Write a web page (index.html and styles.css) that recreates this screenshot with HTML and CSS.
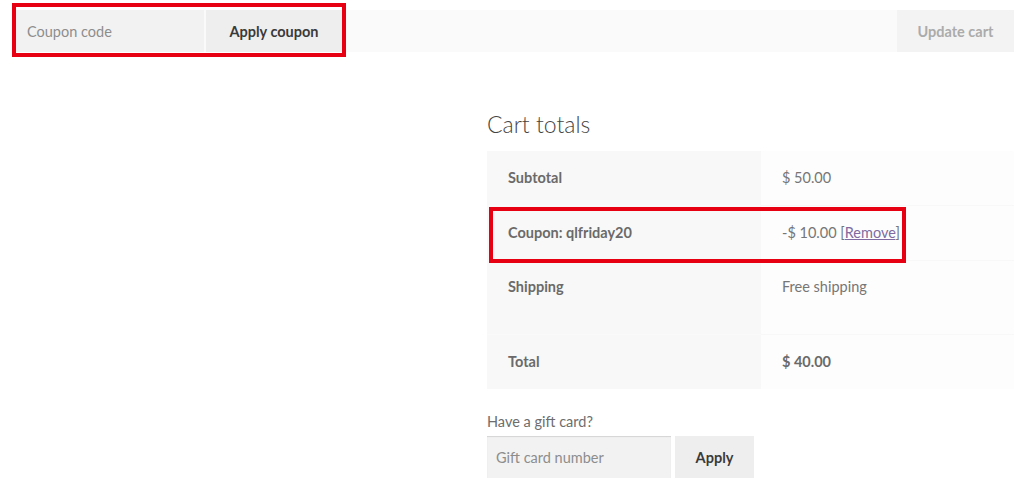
FILE: index.html
```html
<!DOCTYPE html>
<html lang="en">
<head>
    <meta charset="UTF-8">
    <title>Cart</title>
    <link rel="stylesheet" href="styles.css">
</head>
<body>
<div class="cart">
    <!-- coupon + update row -->
    <div class="actions">
        <div class="coupon">
            <input class="coupon__code" type="text" placeholder="Coupon code">
            <button class="coupon__apply" type="button">Apply coupon</button>
            <span class="highlight highlight--coupon"></span>
        </div>
        <button class="update-cart" type="button" disabled>Update cart</button>
    </div>

    <div class="cart-totals">
        <h2 class="cart-totals__title">Cart totals</h2>
        <table class="totals">
            <tr>
                <th>Subtotal</th>
                <td>$ 50.00</td>
            </tr>
            <tr class="totals__coupon">
                <th>Coupon: qlfriday20<span class="highlight highlight--row"></span></th>
                <td>-$ 10.00 [<a href="#">Remove</a>]</td>
            </tr>
            <tr class="totals__shipping">
                <th>Shipping</th>
                <td>Free shipping</td>
            </tr>
            <tr class="totals__total">
                <th>Total</th>
                <td><strong>$ 40.00</strong></td>
            </tr>
        </table>

        <div class="gift-card">
            <label class="gift-card__label" for="gift">Have a gift card?</label>
            <div class="gift-card__form">
                <input id="gift" class="gift-card__number" type="text" placeholder="Gift card number">
                <button class="gift-card__apply" type="button">Apply</button>
            </div>
        </div>
    </div>
</div>
</body>
</html>
```

FILE: styles.css
```css
/* --------------------
 cart page
 -------------------- */
  html, body { margin: 0; }
  body {
    background: #fff;
    font-family: Lato, "Liberation Sans", sans-serif;
    font-size: 14.5px;
    color: #6d6d6d;
  }

  input, button {
    font: inherit;
    border: 0;
    margin: 0;
    outline: 0;
  }

  .cart {
    padding: 10px 10px 0 12px;
  }

  .actions {
    display: flex;
    justify-content: space-between;
    align-items: stretch;
    height: 42px;
    background: #fafafa;
  }

  .coupon {
    position: relative;
    display: flex;
    gap: 2px;
    padding-left: 4px;
  }

  .coupon__code {
    width: 188px;
    padding: 0 11px;
    background: #f2f2f2;
    color: #888;
    box-sizing: border-box;
  }
  .coupon__code::placeholder { color: #8d8d8d; }

  .coupon__apply {
    width: 136px;
    background: #eee;
    color: #3a3a3a;
    font-weight: 700;
  }

  .update-cart {
    width: 117px;
    background: #f3f3f3;
    color: #ababab;
    font-weight: 700;
  }

  /* red annotation boxes */
  .highlight {
    position: absolute;
    z-index: 2;
    box-sizing: border-box;
    border: 4px solid #e60012;
    pointer-events: none;
  }
  .highlight--coupon {
    top: -7px;
    bottom: -5px;
    left: 0;
    right: -4px;
  }
  .highlight--row {
    top: 1px;
    left: 2px;
    width: 417px;
    height: 56px;
  }

  .cart-totals {
    width: 527px;
    margin: 56px 0 0 auto;
  }

  .cart-totals__title {
    margin: 0 0 11px;
    font-size: 23px;
    line-height: 32px;
    font-weight: 300;
    color: #444;
  }

  .totals {
    width: 100%;
    border-collapse: collapse;
  }

  .totals th,
  .totals td {
    padding: 17px 21px;
    line-height: 20px;
    text-align: left;
    vertical-align: top;
    border-bottom: 1px solid rgba(0, 0, 0, 0.02);
  }

  .totals th {
    position: relative;
    width: 232px;
    background: #f8f8f8;
    font-weight: 700;
    color: #6a6a6a;
  }

  .totals td {
    background: #fdfdfd;
    font-weight: 400;
    color: #767676;
  }

  .totals td strong {
    color: #6a6a6a;
  }

  .totals td a {
    color: #7f6ba1;
  }

  .totals__shipping th,
  .totals__shipping td {
    padding-top: 16px;
    padding-bottom: 37px;
  }

  .totals__total th,
  .totals__total td {
    border-bottom: 0;
  }

  .gift-card {
    margin-top: 23px;
  }

  .gift-card__label {
    display: block;
    line-height: 20px;
    margin-bottom: 4px;
    color: #6d6d6d;
  }

  .gift-card__form {
    display: flex;
    gap: 4px;
  }

  .gift-card__number {
    width: 184px;
    height: 42px;
    padding: 0 9px;
    box-sizing: border-box;
    background: #f2f2f2;
    box-shadow: inset 0 1px 1px rgba(0, 0, 0, 0.125);
  }
  .gift-card__number::placeholder { color: #8d8d8d; }

  .gift-card__apply {
    width: 79px;
    height: 42px;
    background: #eee;
    color: #3a3a3a;
    font-weight: 700;
  }
```
